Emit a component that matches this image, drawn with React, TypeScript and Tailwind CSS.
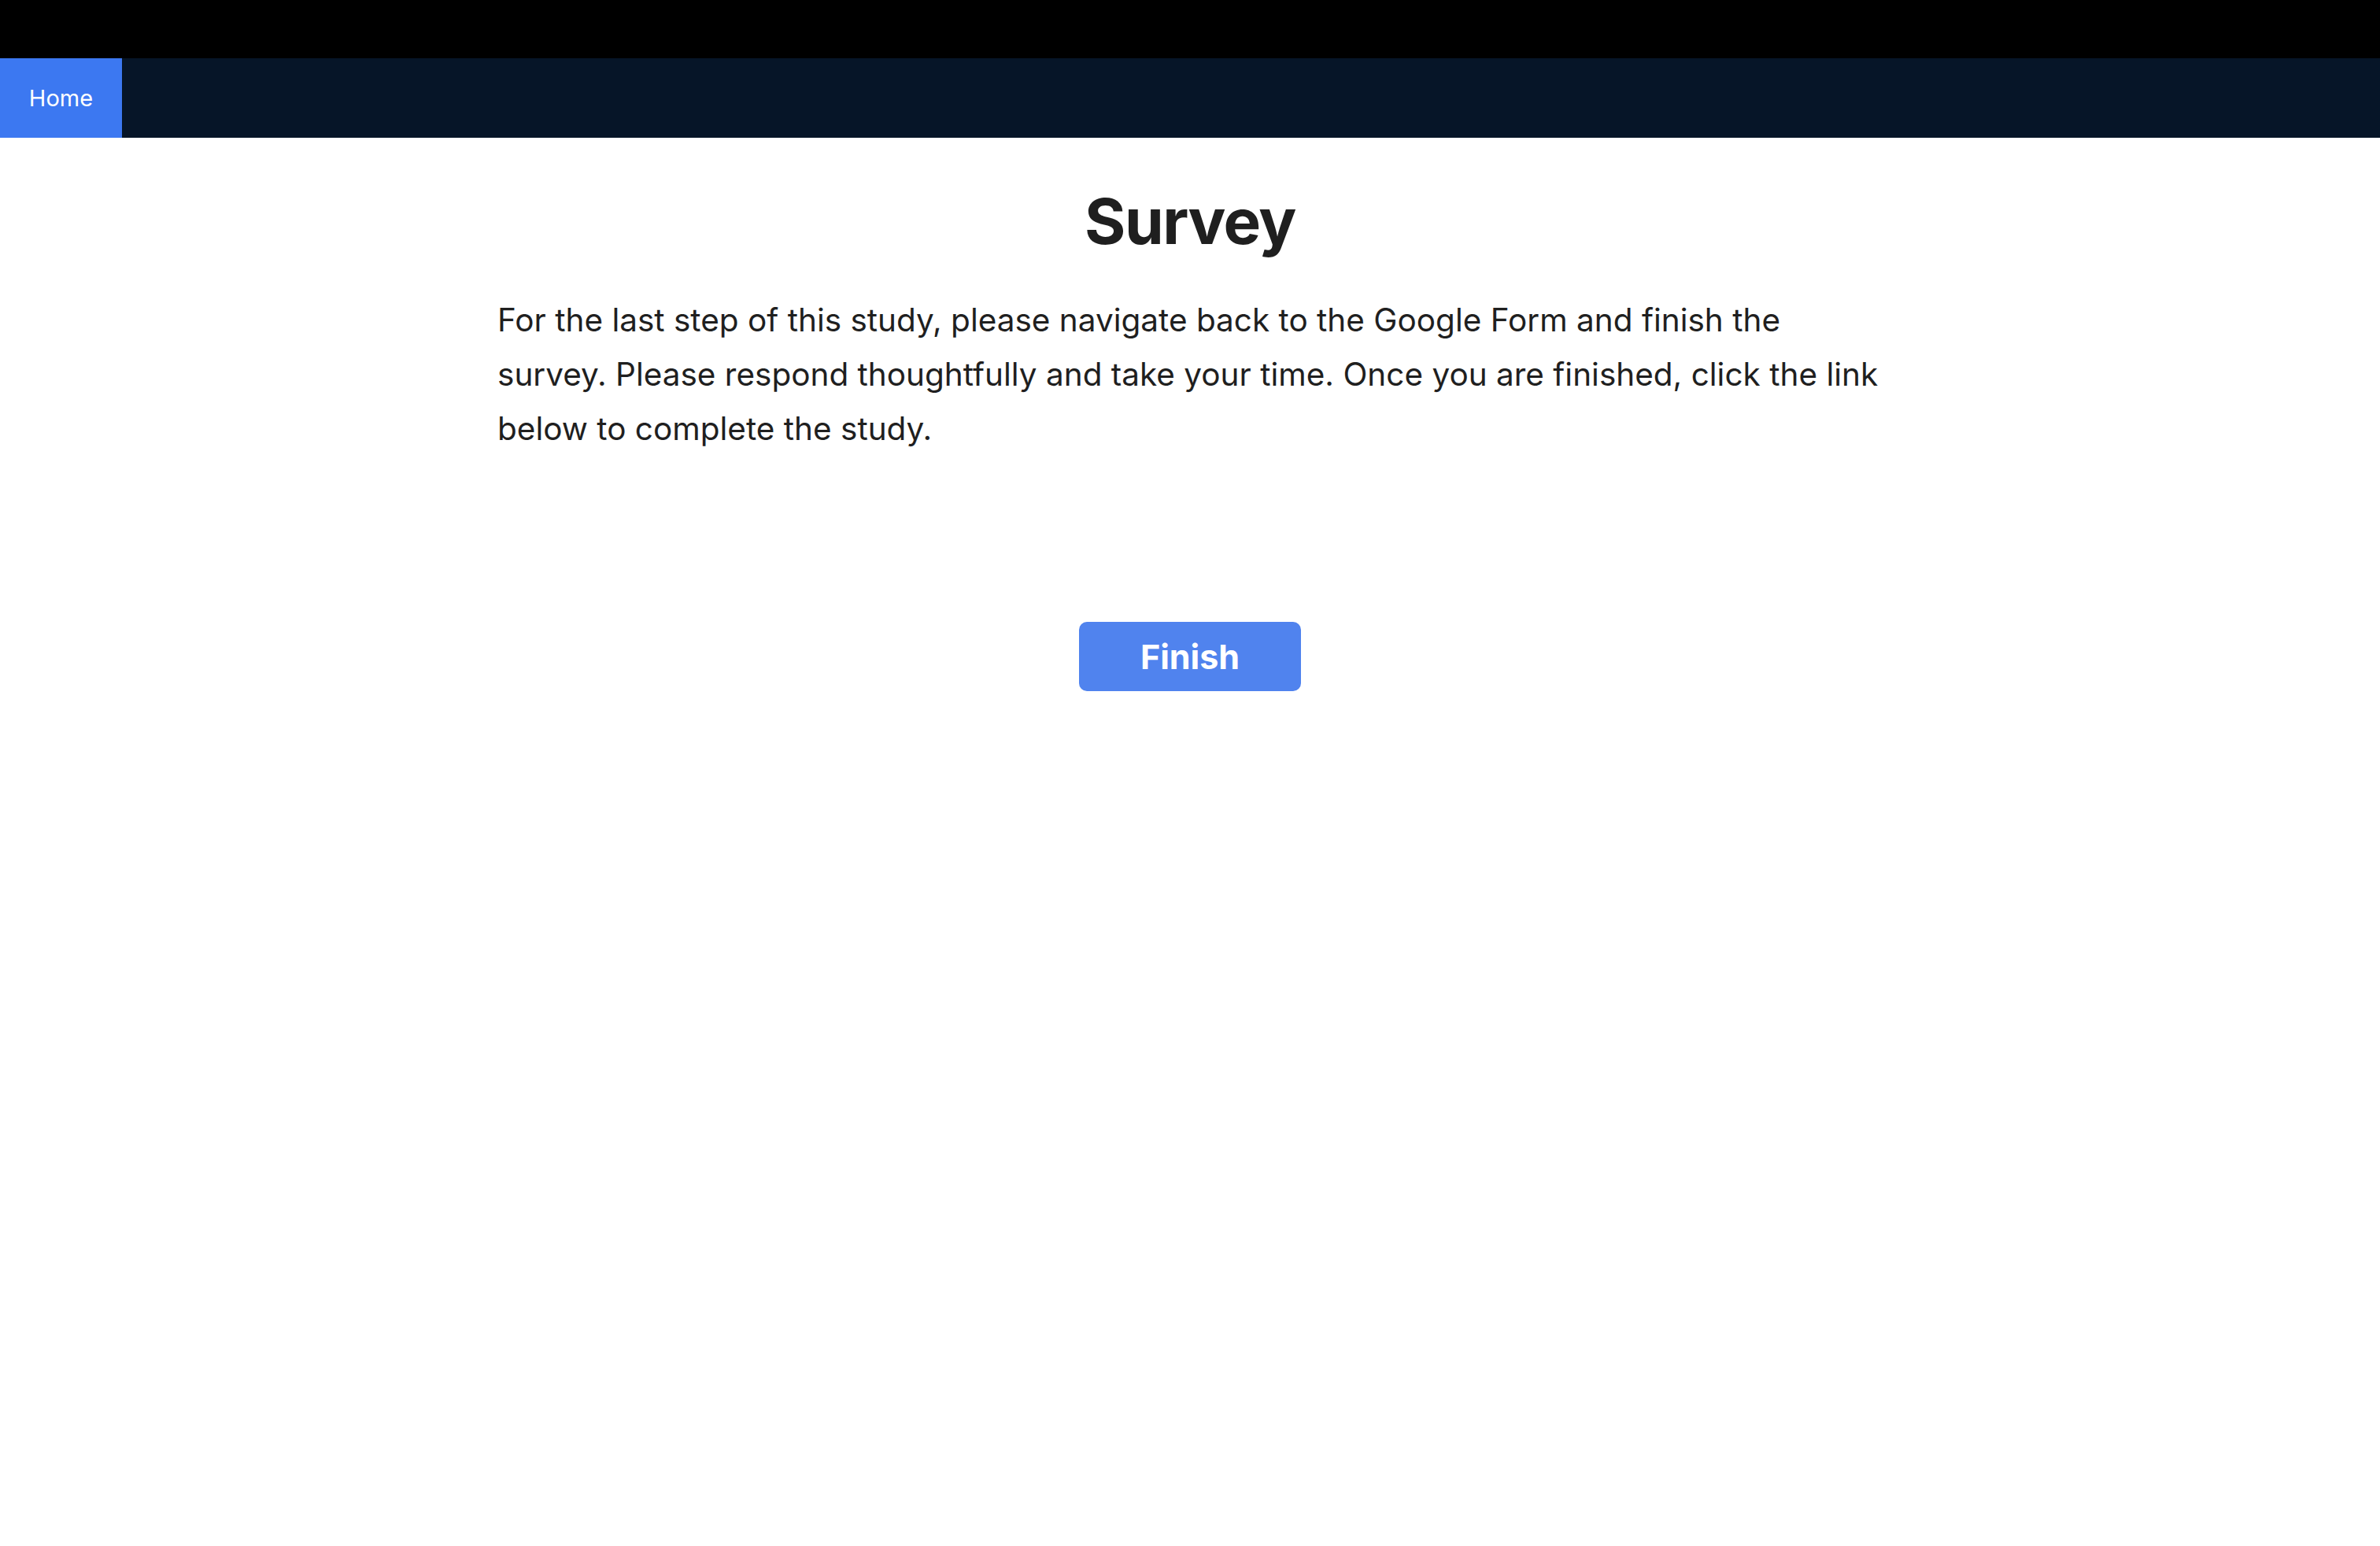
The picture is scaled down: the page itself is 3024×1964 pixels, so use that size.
import React from "react";

const App = () => {
  return (
    <div className="min-h-screen bg-white font-['Inter',sans-serif] text-[#1f1f1f]">
      <div className="h-[74px] bg-black" />
      <nav className="flex h-[101px] bg-[#061528]">
        <a href="#" className="flex w-[155px] items-center justify-center bg-[#3c78f1] text-[29px] text-white">
          Home
        </a>
      </nav>
      <main className="flex flex-col items-center">
        <h1 className="mt-[56px] text-[80px] font-bold leading-[100px] tracking-[-1.5px]">Survey</h1>
        <p className="mt-[41px] w-[1760px] text-[40.5px] leading-[69px]">
          For the last step of this study, please navigate back to the Google Form and finish the survey. Please
          respond thoughtfully and take your time. Once you are finished, click the link below to complete the study.
        </p>
        <button className="mt-[211px] h-[88px] w-[282px] rounded-[10px] bg-[#5083ee] text-[43px] font-bold text-white">
          Finish
        </button>
      </main>
    </div>
  );
};

export default App;
